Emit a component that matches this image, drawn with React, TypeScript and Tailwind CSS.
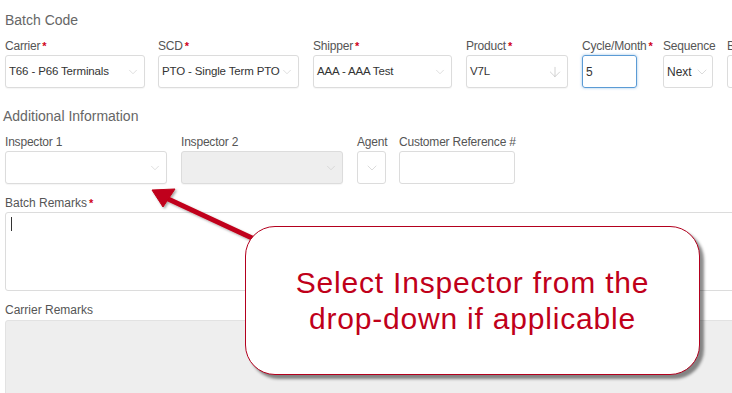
import { ChevronDown, ArrowDown } from "lucide-react";

type FieldProps = {
  label: string;
  required?: boolean;
  width: string;
  children: React.ReactNode;
};

function Field({ label, required, width, children }: FieldProps) {
  return (
    <div className={`${width} shrink-0 flex flex-col`}>
      <div className="h-4 text-[12px] leading-4 text-[#555] whitespace-nowrap tracking-[-0.2px]">
        {label}
        {required && <span className="text-[#d0021b] text-[11px] font-bold align-top ml-[2px]">*</span>}
      </div>
      <div className="mt-[1px]">{children}</div>
    </div>
  );
}

function Select({ value, disabled, icon = "chevron" }: { value?: string; disabled?: boolean; icon?: "chevron" | "arrow" }) {
  return (
    <div
      className={`h-[33px] rounded-[3px] border border-[#dcdcdc] shadow-[0_1px_1px_rgba(0,0,0,0.04)] flex items-center pl-[3px] pr-[4px] ${
        disabled ? "bg-[#eeeeee]" : "bg-white"
      }`}
    >
      <span className="shrink-0 text-[11.5px] text-[#333] whitespace-nowrap tracking-[-0.15px]">{value}</span>
      {icon === "chevron" ? (
        <ChevronDown className="ml-auto w-[14px] h-[14px] shrink-0 text-[#c8c8c8]" strokeWidth={1} />
      ) : (
        <ArrowDown className="ml-auto w-4 h-4 shrink-0 text-[#bdbdbd]" strokeWidth={1} />
      )}
    </div>
  );
}

export default function App() {
  return (
    <div className="relative w-[732px] h-[393px] overflow-hidden bg-white font-['Liberation_Sans',Arial,sans-serif]">
      <div className="pl-[5px] pt-[12px]">
        <h2 className="text-[14px] leading-4 text-[#666]">Batch Code</h2>

        {/* Batch code row */}
        <div className="flex mt-[10px]">
          <Field label="Carrier" required width="w-[140px] mr-[13px]">
            <Select value="T66 - P66 Terminals" />
          </Field>
          <Field label="SCD" required width="w-[141px] mr-[14px]">
            <Select value="PTO - Single Term PTO" />
          </Field>
          <Field label="Shipper" required width="w-[139px] mr-[14px]">
            <Select value="AAA - AAA Test" />
          </Field>
          <Field label="Product" required width="w-[102px] mr-[14px]">
            <Select value="V7L" icon="arrow" />
          </Field>
          <Field label="Cycle/Month" required width="w-[55px] mr-[26px]">
            <div className="h-[33px] rounded-[3px] border border-[#5b9bd5] shadow-[0_0_3px_rgba(91,155,213,0.6)] flex items-center pl-[3px] text-[12px] text-[#333]">
              5
            </div>
          </Field>
          <Field label="Sequence" width="w-[50px] mr-[14px]">
            <div className="h-[33px] rounded-[3px] border border-[#dcdcdc] flex items-center pl-[3px] text-[12px] text-[#333]">
              Next
              <ChevronDown className="w-4 h-4 ml-[2px] text-[#c8c8c8]" strokeWidth={1} />
            </div>
          </Field>
          <Field label="B" width="w-[20px]">
            <div className="h-[33px] w-[40px] rounded-[3px] border border-[#dcdcdc]" />
          </Field>
        </div>

        <h2 className="mt-[20px] -ml-[2px] text-[14px] leading-4 text-[#666]">Additional Information</h2>

        {/* Additional info row */}
        <div className="flex mt-[10px]">
          <Field label="Inspector 1" width="w-[162px] mr-[14px]">
            <Select />
          </Field>
          <Field label="Inspector 2" width="w-[162px] mr-[14px]">
            <Select disabled />
          </Field>
          <Field label="Agent" width="w-[29px] mr-[13px]">
            <div className="h-[33px] rounded-[3px] border border-[#dcdcdc] flex items-center justify-center">
              <ChevronDown className="w-4 h-4 text-[#c8c8c8]" strokeWidth={1} />
            </div>
          </Field>
          <Field label="Customer Reference #" width="w-[116px]">
            <div className="h-[33px] rounded-[3px] border border-[#dcdcdc]" />
          </Field>
        </div>

        <div className="mt-[11px] h-4 text-[12px] leading-4 text-[#555]">
          Batch Remarks<span className="text-[#d0021b] text-[11px] font-bold align-top ml-[2px]">*</span>
        </div>
        <div className="mt-[1px] h-[79px] w-[760px] rounded-[3px] border border-[#dcdcdc] pl-[5px] pt-[4px]">
          <div className="w-px h-[14px] bg-[#333]" />
        </div>

        <div className="mt-[11px] h-4 text-[12px] leading-4 text-[#555]">Carrier Remarks</div>
        <div className="mt-[2px] h-[90px] w-[760px] rounded-[3px] border border-[#e2e2e2] bg-[#eeeeee]" />
      </div>

      {/* Arrow annotation */}
      <svg className="absolute left-0 top-0 pointer-events-none" width="732" height="393">
        <defs>
          <filter id="sh" x="-20%" y="-20%" width="140%" height="140%">
            <feDropShadow dx="1.5" dy="1.5" stdDeviation="1" floodColor="#000" floodOpacity="0.35" />
          </filter>
        </defs>
        <g filter="url(#sh)" fill="#c0001a" stroke="#c0001a">
          <line x1="252" y1="238" x2="166" y2="198" strokeWidth="5" strokeLinecap="round" />
          <polygon points="152,190 175,189 163,207" strokeWidth="1" strokeLinejoin="round" />
        </g>
      </svg>

      {/* Callout */}
      <div className="absolute left-[245px] top-[226px] w-[455px] h-[149px] rounded-[30px] border-[1.5px] border-[#b3001e] bg-white shadow-[4px_4px_3px_rgba(0,0,0,0.45)] flex items-center justify-center">
        <p className="text-center text-[30px] leading-[36px] tracking-[0.8px] text-[#c0001a] whitespace-nowrap">
          Select Inspector from the
          <br />
          drop-down if applicable
        </p>
      </div>
    </div>
  );
}
